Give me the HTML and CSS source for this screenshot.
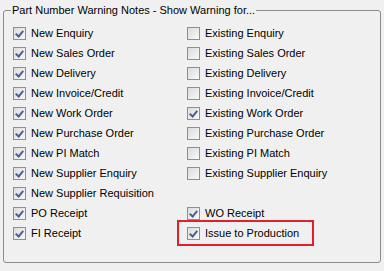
FILE: index.html
```html
<!DOCTYPE html>
<html lang="en">
<head>
  <meta charset="UTF-8" />
  <title>Part Number Warning Notes</title>
  <link rel="stylesheet" href="styles.css">
</head>
<body>
  <fieldset class="group">
    <legend>Part Number Warning Notes - Show Warning for...</legend>
    <div class="grid">
      <label class="opt"><span class="box on"></span>New Enquiry</label>
      <label class="opt"><span class="box"></span>Existing Enquiry</label>
      <label class="opt"><span class="box on"></span>New Sales Order</label>
      <label class="opt"><span class="box"></span>Existing Sales Order</label>
      <label class="opt"><span class="box on"></span>New Delivery</label>
      <label class="opt"><span class="box"></span>Existing Delivery</label>
      <label class="opt"><span class="box on"></span>New Invoice/Credit</label>
      <label class="opt"><span class="box"></span>Existing Invoice/Credit</label>
      <label class="opt"><span class="box on"></span>New Work Order</label>
      <label class="opt"><span class="box on"></span>Existing Work Order</label>
      <label class="opt"><span class="box on"></span>New Purchase Order</label>
      <label class="opt"><span class="box"></span>Existing Purchase Order</label>
      <label class="opt"><span class="box on"></span>New PI Match</label>
      <label class="opt"><span class="box"></span>Existing PI Match</label>
      <label class="opt"><span class="box on"></span>New Supplier Enquiry</label>
      <label class="opt"><span class="box"></span>Existing Supplier Enquiry</label>
      <label class="opt"><span class="box on"></span>New Supplier Requisition</label>
      <span></span>
      <label class="opt"><span class="box on"></span>PO Receipt</label>
      <label class="opt"><span class="box on"></span>WO Receipt</label>
      <label class="opt"><span class="box on"></span>FI Receipt</label>
      <label class="opt marked"><span class="box on"></span>Issue to Production</label>
    </div>
  </fieldset>
</body>
</html>
```

FILE: styles.css
```css
body {
  margin: 0;
  background: #f0f0f0;
  font-family: "Liberation Sans", Arial, sans-serif;
  font-size: 11px;
  color: #000;
  width: 384px;
  height: 271px;
  overflow: hidden;
}
.group {
  margin: 4px 3px 0 3px;
  width: 378px;
  height: 259px;
  box-sizing: border-box;
  border: 1px solid #8c8c8c;
  border-radius: 3px;
  padding: 7px 0 0 9px;
}
.group legend {
  padding: 0 1px;
  margin-left: -2px;
}
.grid {
  display: grid;
  grid-template-columns: 174px 1fr;
  grid-auto-rows: 20px;
}
.opt {
  display: flex;
  align-items: center;
  gap: 5px;
  height: 20px;
}
.box {
  width: 11px;
  height: 11px;
  border: 1px solid #8e8f8f;
  background: linear-gradient(135deg, #dcdcdc, #f8f8f8);
  position: relative;
  flex: none;
}
.box.on::after {
  content: "";
  position: absolute;
  left: 3px;
  top: 1px;
  width: 3px;
  height: 6px;
  border: solid #4a5f97;
  border-width: 0 2px 2px 0;
  transform: rotate(40deg);
}
.marked {
  margin-left: -10px;
  padding-left: 8px;
  width: 125px;
  height: 22px;
  border: 2px solid #e0202a;
  align-self: center;
}
```
